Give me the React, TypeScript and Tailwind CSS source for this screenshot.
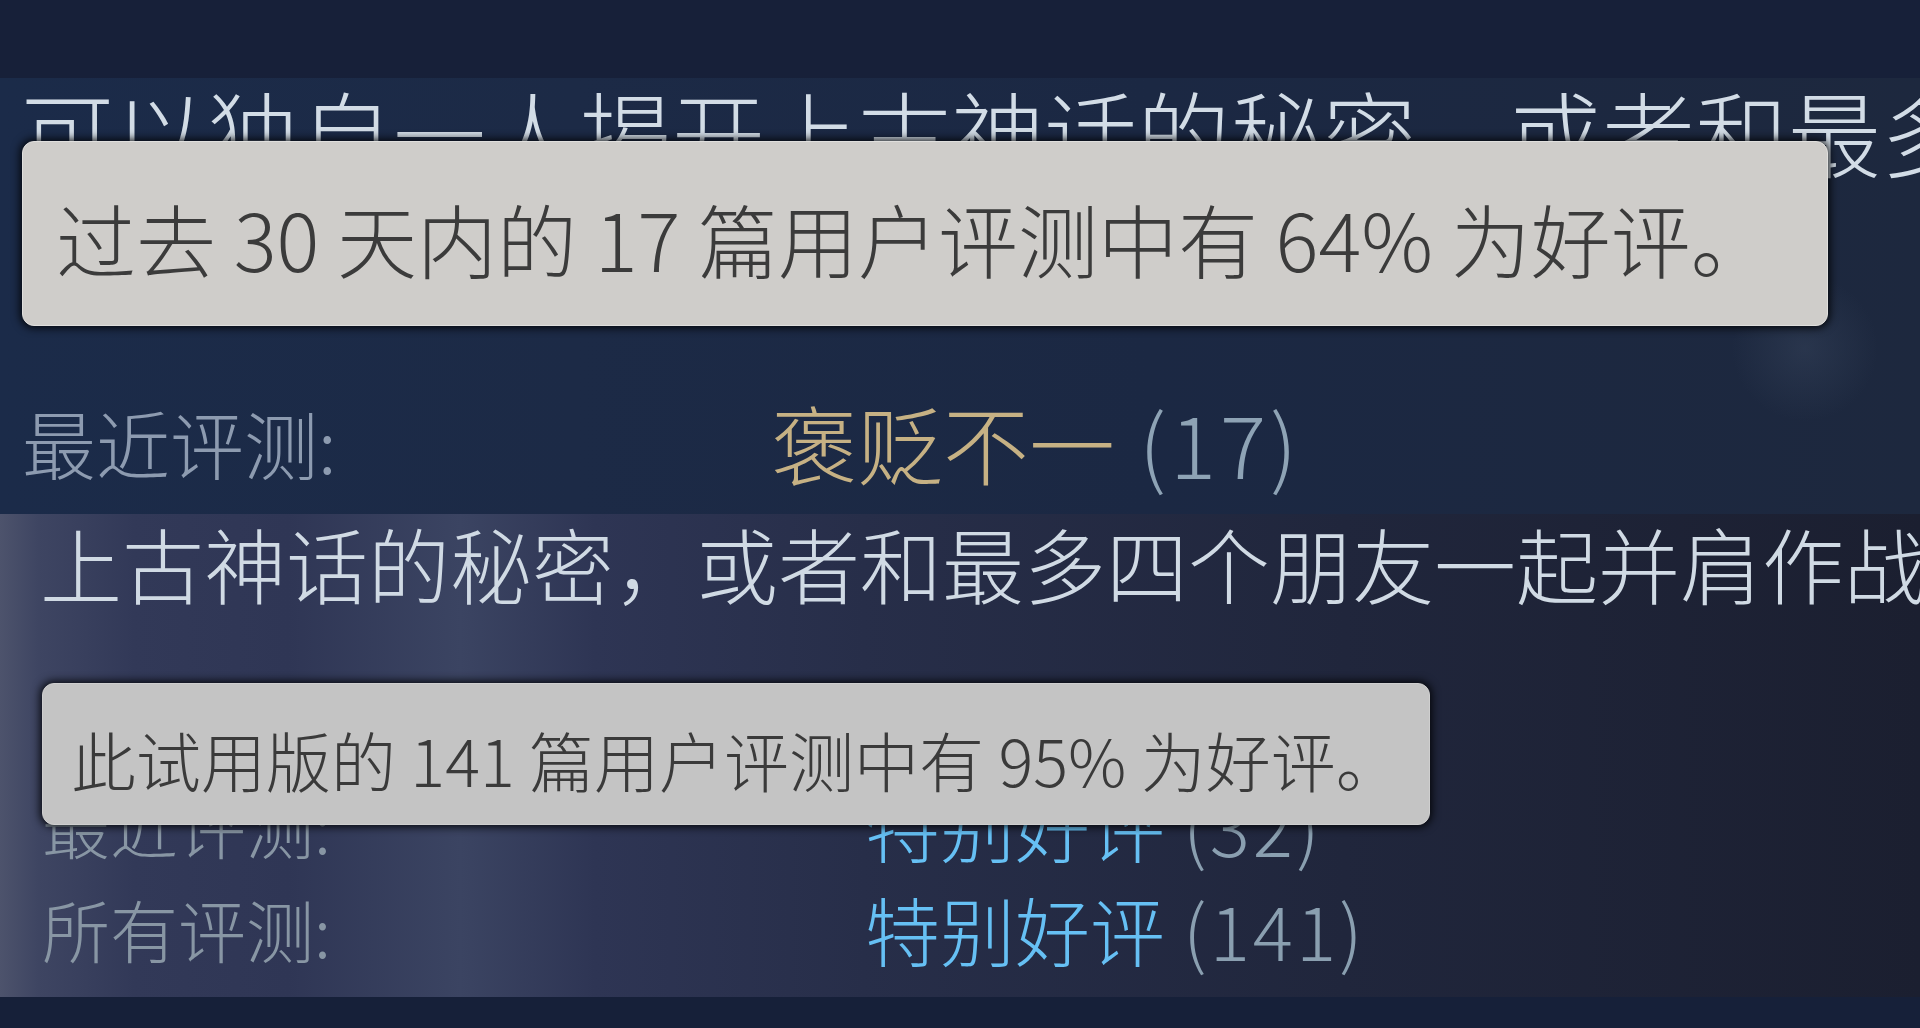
import type {ReactNode} from "react"

const CJK = "font-['Noto_Sans_CJK_SC','Noto_Sans',sans-serif] font-light"

interface RowProps {
    label: string
    summary: string
    count: string
    labelClass: string
    summaryClass: string
    countClass: string
    labelWidth: string
}

function ReviewRow(p: RowProps) {
    return <div className="flex items-center leading-none whitespace-nowrap">
        <div className={`${p.labelWidth} shrink-0 ${p.labelClass}`}>{p.label}</div>
        <div className="flex items-center">
            <span className={p.summaryClass}>{p.summary}</span>
            <span className={p.countClass}>{p.count}</span>
        </div>
    </div>
}

function Tooltip({className, children}: {className: string, children: ReactNode}) {
    return <div className={`absolute flex items-center rounded-[12px] shadow-[0_0_8px_2px_rgba(0,0,0,0.85)] ${className}`}>
        {children}
    </div>
}

export default function App() {
    return <div className={`w-full h-[1028px] flex flex-col overflow-hidden bg-[#172039] ${CJK}`}>
        <div className="h-[78px] shrink-0 bg-[#172039]"/>

        {/* past 30 days: mixed */}
        <div className="relative h-[436px] shrink-0 overflow-hidden bg-[radial-gradient(circle_at_94%_62%,rgba(70,85,110,0.3),transparent_4%),linear-gradient(90deg,#1b2b49_0%,#1c2a46_30%,#1b2843_60%,#1d283e_100%)]">
            <div className="pt-[6px] pl-[21px] text-[93px] leading-none text-[#d2dce6] whitespace-nowrap">
                可以独自一人揭开上古神话的秘密，或者和最多四个朋友一起并肩作战
            </div>
            <div className="mt-[222px] pl-[22px]">
                <ReviewRow label="最近评测:" summary="褒贬不一" count="(17)"
                           labelWidth="w-[749px]"
                           labelClass="text-[74px] text-[#8d9bb0]"
                           summaryClass="text-[86px] text-[#c6b184]"
                           countClass="ml-[24px] text-[86px] tracking-[4px] text-[#8ea3b5]"/>
            </div>
            <Tooltip className="left-[22px] top-[63px] w-[1806px] h-[185px] pl-[33px] pt-[7px] bg-[#cfcdca] border border-[#e0dfdd]">
                <span className="text-[80px] leading-none text-[#3b3b3b] whitespace-nowrap">
                    过去 30 天内的 17 篇用户评测中有 64% 为好评。
                </span>
            </Tooltip>
        </div>

        {/* demo reviews: very positive */}
        <div className="relative h-[483px] shrink-0 overflow-hidden bg-[linear-gradient(90deg,#4d536c_0%,#3e4562_2%,#323958_7%,#2f3655_15%,#3b4462_24%,#2e3554_31%,#272e49_45%,#20263c_70%,#1b1f30_100%)]">
            <div className="pt-[8px] pl-[40px] text-[82px] leading-none text-[#d0dae4] whitespace-nowrap">
                上古神话的秘密，或者和最多四个朋友一起并肩作战
            </div>
            <div className="mt-[183px] pl-[42px] flex flex-col gap-[29px]">
                <ReviewRow label="最近评测:" summary="特别好评" count="(32)"
                           labelWidth="w-[823px]"
                           labelClass="text-[68px] text-[#8896a4]"
                           summaryClass="text-[75px] text-[#66c0f4]"
                           countClass="ml-[18px] text-[75px] tracking-[3px] text-[#8a9fb0]"/>
                <ReviewRow label="所有评测:" summary="特别好评" count="(141)"
                           labelWidth="w-[823px]"
                           labelClass="text-[68px] text-[#8896a4]"
                           summaryClass="text-[75px] text-[#66c0f4]"
                           countClass="ml-[18px] text-[75px] tracking-[3px] text-[#8a9fb0]"/>
            </div>
            <Tooltip className="left-[42px] top-[169px] w-[1388px] h-[142px] pl-[28px] pt-[10px] bg-[#c4c4c4] border border-[#cfcfcf]">
                <span className="text-[65px] leading-none text-[#3a3a3a] whitespace-nowrap">
                    此试用版的 141 篇用户评测中有 95% 为好评。
                </span>
            </Tooltip>
        </div>

        <div className="flex-1 bg-[#162039]"/>
    </div>
}
